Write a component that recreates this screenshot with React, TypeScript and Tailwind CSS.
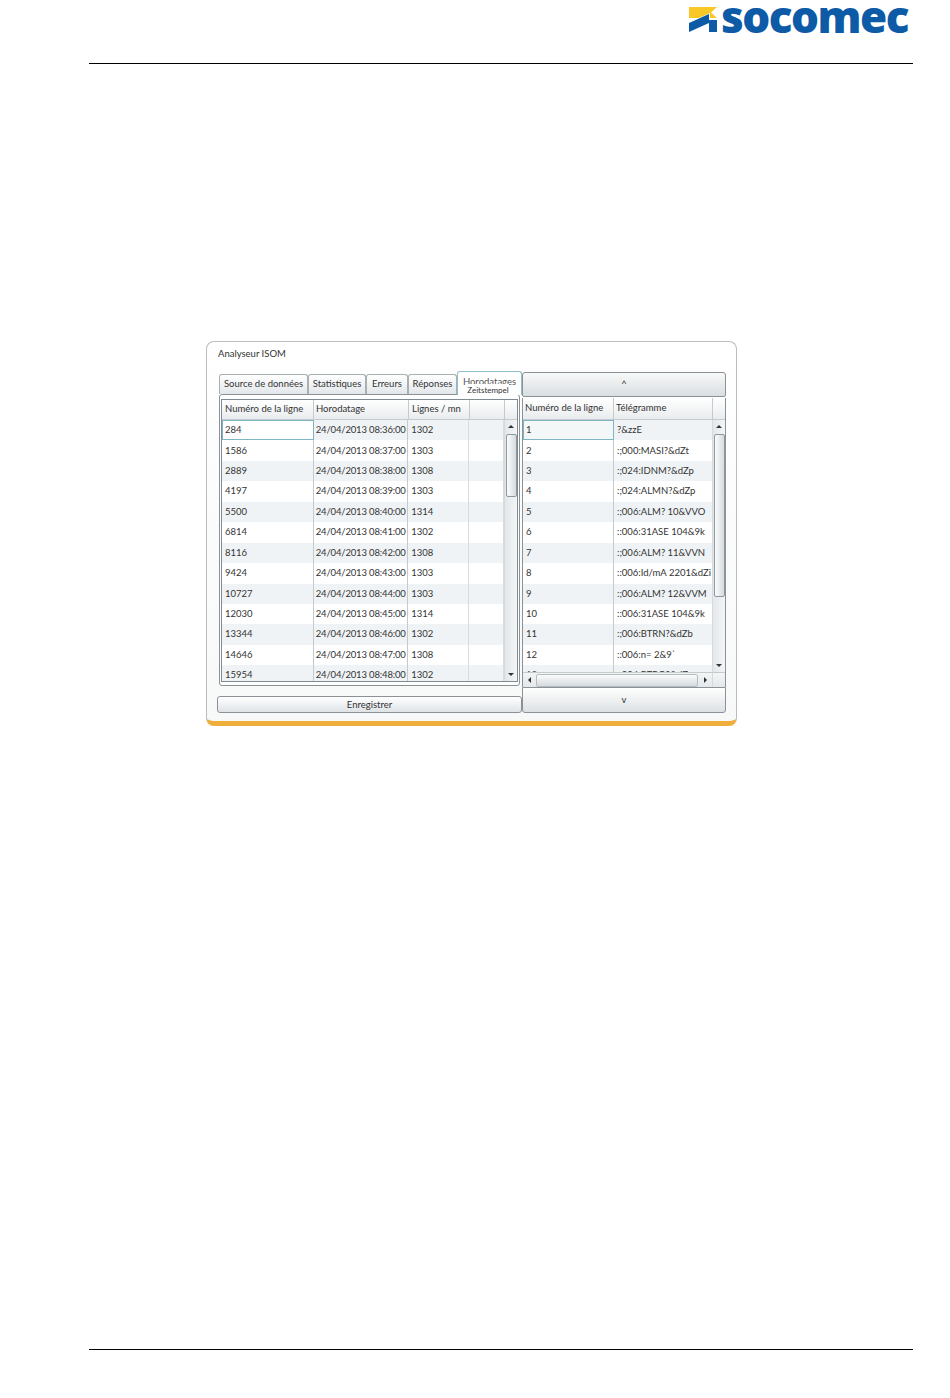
const leftRows = [
  ['284', '24/04/2013 08:36:00', '1302'],
  ['1586', '24/04/2013 08:37:00', '1303'],
  ['2889', '24/04/2013 08:38:00', '1308'],
  ['4197', '24/04/2013 08:39:00', '1303'],
  ['5500', '24/04/2013 08:40:00', '1314'],
  ['6814', '24/04/2013 08:41:00', '1302'],
  ['8116', '24/04/2013 08:42:00', '1308'],
  ['9424', '24/04/2013 08:43:00', '1303'],
  ['10727', '24/04/2013 08:44:00', '1303'],
  ['12030', '24/04/2013 08:45:00', '1314'],
  ['13344', '24/04/2013 08:46:00', '1302'],
  ['14646', '24/04/2013 08:47:00', '1308'],
  ['15954', '24/04/2013 08:48:00', '1302'],
];

const rightRows = [
  ['1', '?&zzE'],
  ['2', ':;000:MASI?&dZt'],
  ['3', ':;024:IDNM?&dZp'],
  ['4', ':;024:ALMN?&dZp'],
  ['5', ':;006:ALM? 10&VVO'],
  ['6', '::006:31ASE 104&9k'],
  ['7', ':;006:ALM? 11&VVN'],
  ['8', '::006:Id/mA 2201&dZi'],
  ['9', ':;006:ALM? 12&VVM'],
  ['10', '::006:31ASE 104&9k'],
  ['11', ':;006:BTRN?&dZb'],
  ['12', '::006:n= 2&9`'],
  ['13', ':;006:BTRO?&dZ'],
];

const tabs = [
  { label: 'Source de données', w: 'w-[89px]' },
  { label: 'Statistiques', w: 'w-[58px]' },
  { label: 'Erreurs', w: 'w-[42px]' },
  { label: 'Réponses', w: 'w-[49px]' },
];

const Arrow = ({ dir }: { dir: 'up' | 'down' | 'left' | 'right' }) => {
  const pts = { up: '0,4 3,1 6,4', down: '0,2 6,2 3,5', left: '4,0 4,6 1,3', right: '2,0 2,6 5,3' }[dir];
  return (
    <svg width="6" height="6" viewBox="0 0 6 6" className="shrink-0">
      <polygon points={pts} fill="#333" />
    </svg>
  );
};

const VScroll = ({ thumb }: { thumb: string }) => (
  <div className="flex w-[13px] shrink-0 flex-col items-center border-l border-[#d5dade] bg-gradient-to-r from-[#e4e8eb] to-[#f3f5f6]">
    <div className="flex h-[14px] items-center"><Arrow dir="up" /></div>
    <div className={`${thumb} w-[11px] rounded-[2px] border border-[#8e979e] bg-gradient-to-r from-[#fbfcfc] to-[#d6dbdf]`} />
    <div className="flex-1" />
    <div className="flex h-[14px] items-center"><Arrow dir="down" /></div>
  </div>
);

const Logo = () => (
  <div className="flex h-[63px] justify-end pr-[42px]">
    <div className="flex h-[40px] items-start gap-[4px] pt-[7px]">
      <svg width="28" height="25" viewBox="0 0 28 25" className="shrink-0">
        <polygon points="0,0 28,0 22,5.5 28,11 21,11 21,6 10,11 0,11" fill="#f9c826" />
        <polygon points="0,16 20,7 20,13 28,13 28,25 20,25 20,16 0,25" fill="#0d5aa7" />
      </svg>
      <span className="-mt-[4px] font-['Open_Sans',sans-serif] text-[44px] leading-[26px] font-extrabold tracking-[-1.5px] text-[#0d5aa7]">socomec</span>
    </div>
  </div>
);

export default function App() {
  return (
    <div className="flex h-[1398px] w-[950px] flex-col bg-white font-['Lato',sans-serif] text-[9.5px] whitespace-nowrap text-[#333]">
      <Logo />
      <div className="mx-[37px] ml-[89px] h-px bg-black" />

      <div className="mt-[277px] ml-[206px] flex h-[385px] w-[531px] flex-col rounded-[8px] border border-b-[5px] border-[#b9bdbf] border-b-[#efae3c] bg-gradient-to-b from-white to-[#f7f8f8] pt-[6px] pl-[10px]">
        <div className="h-[23px] pl-[1px] leading-[12px]">Analyseur ISOM</div>

        <div className="flex">
          <div className="flex w-[305px] flex-col">
            <div className="flex h-[23px] items-end pl-[2px]">
              {tabs.map((t) => (
                <div key={t.label} className={`${t.w} flex h-[20px] items-center justify-center rounded-t-[3px] border border-b-0 border-[#a9afb3] bg-gradient-to-b from-white to-[#e3e7ea]`}>
                  {t.label}
                </div>
              ))}
              <div className="relative z-10 -mb-px flex h-[24px] w-[65px] justify-center rounded-t-[3px] border border-b-0 border-[#8fc0c9] bg-white pt-[4px] leading-[12px] text-[#555]">
                Horodatages
                <span className="absolute top-[12px] left-[9px] h-[10px] w-[42px] bg-white pt-[1px] text-center text-[8px] leading-[10px] text-[#333]">Zeitstempel</span>
              </div>
            </div>

            <div className="ml-[2px] flex h-[292px] w-[301px] flex-col rounded-[3px] border border-[#8a9297] bg-white p-[1px] pt-[4px]">
              <div className="flex h-[283px] flex-col overflow-hidden border border-[#7f8a91]">
                <div className="flex h-[20px] shrink-0 items-center border-b border-[#c5cacd] bg-gradient-to-b from-white to-[#e9ecee]">
                  <div className="flex h-full w-[92px] items-center border-r border-[#c5cacd] pl-[3px]">Numéro de la ligne</div>
                  <div className="flex h-full w-[95px] items-center border-r border-[#c5cacd] pl-[2px]">Horodatage</div>
                  <div className="flex h-full w-[61px] items-center border-r border-[#c5cacd] pl-[3px]">Lignes / mn</div>
                  <div className="h-full w-[35px] border-r border-[#c5cacd]" />
                  <div className="flex-1" />
                </div>
                <div className="flex min-h-0 flex-1">
                  <div className="min-w-0 flex-1 overflow-hidden">
                    {leftRows.map((r, i) => (
                      <div key={r[0]} className={`flex h-[20.45px] items-center ${i % 2 === 0 ? 'bg-[#f0f3f6]' : 'bg-white'}`}>
                        <div className={`flex h-full w-[92px] items-center ${i === 0 ? 'border border-[#7fb6c4] bg-white pl-[2px]' : 'border-r border-[#c5cacd] pl-[3px]'}`}>{r[0]}</div>
                        <div className="flex h-full w-[95px] items-center border-r border-[#c5cacd] pl-[2px] tracking-[-0.15px]">{r[1]}</div>
                        <div className="flex h-full w-[61px] items-center border-r border-[#d8dcdf] pl-[3px]">{r[2]}</div>
                        <div className="h-full w-[35px] border-r border-[#d8dcdf]" />
                      </div>
                    ))}
                  </div>
                  <VScroll thumb="h-[63px]" />
                </div>
              </div>
            </div>

            <div className="mt-[10px] flex h-[17px] w-[305px] items-center justify-center rounded-[3px] border border-[#8a9297] bg-gradient-to-b from-white to-[#dfe3e6] pt-[1px]">Enregistrer</div>
          </div>

          <div className="mt-[1px] flex w-[204px] flex-col">
            <div className="flex h-[25px] items-center justify-center rounded-t-[3px] rounded-b-[2px] border border-[#8a9297] bg-gradient-to-b from-[#f8f9f9] to-[#d9dee1]">^</div>
            <div className="mt-[1px] flex h-[289px] flex-col overflow-hidden border-x border-[#8a9297] bg-white">
              <div className="flex h-[22px] shrink-0 items-center border-b border-[#c5cacd] bg-gradient-to-b from-white to-[#e9ecee]">
                <div className="flex h-full w-[91px] items-center border-r border-[#c5cacd] pl-[2px]">Numéro de la ligne</div>
                <div className="flex h-full w-[99px] items-center border-r border-[#c5cacd] pl-[2px]">Télégramme</div>
              </div>
              <div className="flex min-h-0 flex-1">
                <div className="min-w-0 flex-1 overflow-hidden">
                  {rightRows.map((r, i) => (
                    <div key={r[0]} className={`flex h-[20.45px] items-center ${i % 2 === 0 ? 'bg-[#f0f3f6]' : 'bg-white'}`}>
                      <div className={`flex h-full w-[91px] items-center ${i === 0 ? 'border border-[#7fb6c4] bg-[#f4f7f8] pl-[2px]' : 'border-r border-[#c5cacd] pl-[3px]'}`}>{r[0]}</div>
                      <div className="flex h-full flex-1 items-center overflow-hidden pl-[3px]">{r[1]}</div>
                    </div>
                  ))}
                </div>
                <VScroll thumb="h-[163px]" />
              </div>
              <div className="flex h-[15px] shrink-0 items-center border-t border-[#c5cacd] bg-gradient-to-b from-[#f3f5f6] to-[#e4e8eb]">
                <div className="flex w-[13px] justify-center"><Arrow dir="left" /></div>
                <div className="h-[13px] w-[162px] rounded-[2px] border border-[#b5bcc1] bg-gradient-to-b from-[#fbfcfc] to-[#d6dbdf]" />
                <div className="flex w-[14px] justify-center"><Arrow dir="right" /></div>
                <div className="h-full flex-1 border-l border-[#d5dade]" />
              </div>
            </div>
            <div className="flex h-[26px] items-center justify-center rounded-b-[3px] border border-[#8a9297] bg-gradient-to-b from-white to-[#dde1e4]">v</div>
          </div>
        </div>
      </div>

      <div className="mt-[623px] mr-[37px] ml-[89px] h-px bg-black" />
    </div>
  );
}
